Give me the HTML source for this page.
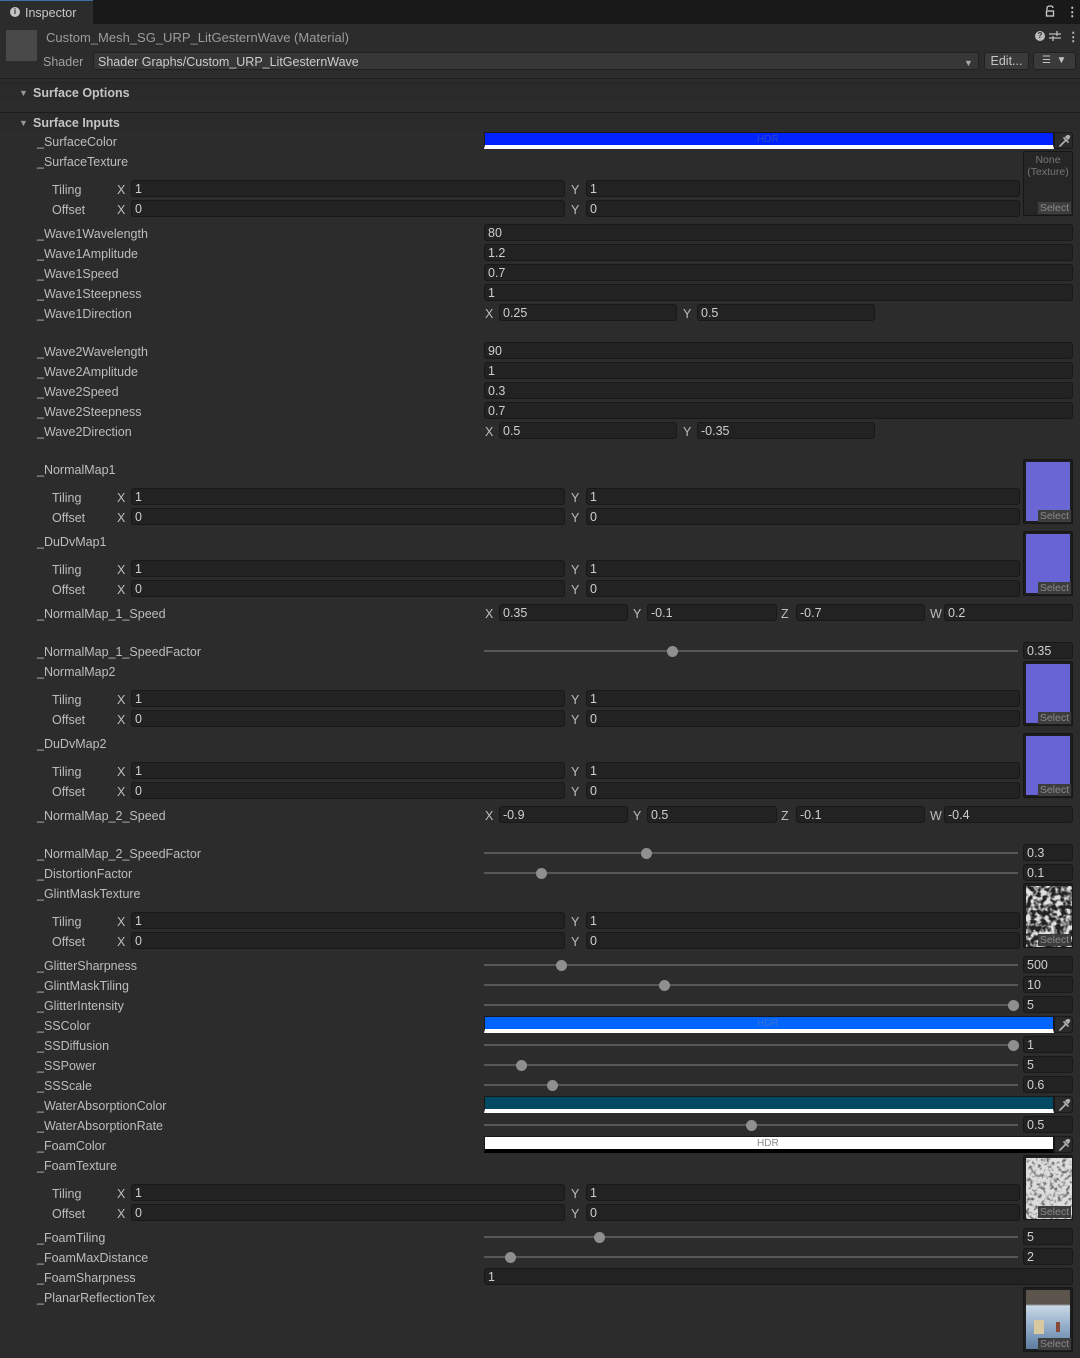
<!DOCTYPE html>
<html><head><meta charset="utf-8"><style>
*{margin:0;padding:0;box-sizing:border-box}
body{width:1080px;height:1358px;background:#2c2c2c;font-family:"Liberation Sans",sans-serif;font-size:12.5px;color:#bdbdbd;position:relative;overflow:hidden}
div,span{position:absolute}
.t{line-height:16px;white-space:nowrap;margin-top:1px}
.f{height:17px;background:#222;border:1px solid #181818;border-radius:3px;color:#cfcfcf;font-size:12.5px;line-height:17px;padding-left:3px;white-space:nowrap}
.tr{left:484px;width:534px;height:2px;background:#575757}
.kn{width:11px;height:11px;border-radius:50%;background:#8f8f8f}
.th{left:1023px;width:50px;background:#1d1d1d;border:1px solid #161616;border-radius:2px;overflow:hidden}
.th .in{left:2px;top:2px;right:2px;bottom:2px}
.sel{right:1px;bottom:1px;background:#3d3d3d;color:#8a8a8a;font-size:10.5px;line-height:12px;padding:0 2px}
.cb{left:484px;width:570px;border:1px solid #191919}
.ey{left:1054px;width:19px;background:#2a2a2a;border:1px solid #191919;border-radius:0 3px 3px 0}
.ey svg{position:absolute;left:3px;top:2px}
</style></head><body>
<svg width="0" height="0" style="position:absolute"><defs><g id="eye"><path d="M2 11 L8 5 M6 3 L10 7 M8 2 Q10 0 11 1 Q12 2 10 4 Z" stroke="#b0b0b0" stroke-width="1.6" fill="#b0b0b0" stroke-linecap="round"/></g></defs></svg>
<!-- top bar -->
<div style="left:0;top:0;width:1080px;height:24px;background:#191919"></div>
<div style="left:0;top:0;width:93px;height:24px;background:#2c2c2c;border-top:1px solid #3a6fa8"></div>
<div style="left:10px;top:7px;width:10px;height:10px;border-radius:50%;background:#c4c4c4;color:#2c2c2c;font-size:8px;line-height:10px;text-align:center;font-weight:bold">i</div>
<div class="t" style="left:25px;top:4px;color:#c8c8c8">Inspector</div>
<svg style="position:absolute;left:1045px;top:5px" width="10" height="12"><path d="M2 5 V3 Q2 1 5 1 Q8 1 8 3" stroke="#ccc" stroke-width="1.3" fill="none"/><rect x="1.5" y="6" width="7" height="5" stroke="#ccc" stroke-width="1.3" fill="none"/></svg>
<div class="t" style="left:1066px;top:3px;color:#ccc;font-weight:bold">⋮</div>
<!-- header -->
<div style="left:6px;top:30px;width:31px;height:31px;background:#494949"></div>
<div class="t" style="left:46px;top:29px;color:#9c9c9c;font-size:13px">Custom_Mesh_SG_URP_LitGesternWave (Material)</div>
<div style="left:1035px;top:31px;width:10px;height:10px;border-radius:50%;background:#bbb;color:#2c2c2c;font-size:8px;line-height:10px;text-align:center;font-weight:bold">?</div>
<svg style="position:absolute;left:1049px;top:30px" width="12" height="12"><path d="M0 4H12M0 8H12M8 1V6M4 6V11" stroke="#bbb" stroke-width="1.3"/></svg>
<div class="t" style="left:1067px;top:28px;color:#bbb;font-weight:bold">⋮</div>
<div class="t" style="left:43px;top:53px;color:#a0a0a0">Shader</div>
<div style="left:93px;top:52px;width:886px;height:18px;background:#373737;border:1px solid #202020;border-radius:3px"></div>
<div class="t" style="left:98px;top:53px;color:#cdcdcd">Shader Graphs/Custom_URP_LitGesternWave</div>
<div class="t" style="left:964px;top:54px;color:#aaa;font-size:9px">▼</div>
<div style="left:984px;top:52px;width:45px;height:18px;background:#3a3a3a;border:1px solid #202020;border-radius:3px;color:#c4c4c4;text-align:center;line-height:16px">Edit...</div>
<div style="left:1033px;top:52px;width:43px;height:18px;background:#3a3a3a;border:1px solid #202020;border-radius:3px;color:#c4c4c4;font-size:10px;line-height:16px;padding-left:8px">☰ &nbsp;▼</div>
<div style="left:0;top:78px;width:1080px;height:1px;background:#1c1c1c"></div>
<div style="left:0;top:82px;width:1080px;height:1px;background:#242424"></div>
<div style="left:0;top:83px;width:1080px;height:18px;background:#2a2a2a"></div>
<div class="t" style="left:19px;top:84px;font-size:9px;color:#999">▼</div>
<div class="t" style="left:33px;top:84px;font-weight:bold;color:#c4c4c4">Surface Options</div>
<div style="left:0;top:112px;width:1080px;height:1px;background:#1c1c1c"></div>
<div style="left:0;top:113px;width:1080px;height:17px;background:#2a2a2a"></div>
<div class="t" style="left:19px;top:114px;font-size:9px;color:#999">▼</div>
<div class="t" style="left:33px;top:114px;font-weight:bold;color:#c4c4c4">Surface Inputs</div>

<!-- labels -->
<div class="t" style="left:37px;top:133px">_SurfaceColor</div>
<div class="t" style="left:37px;top:153px">_SurfaceTexture</div>
<div class="t" style="left:37px;top:225px">_Wave1Wavelength</div>
<div class="t" style="left:37px;top:245px">_Wave1Amplitude</div>
<div class="t" style="left:37px;top:265px">_Wave1Speed</div>
<div class="t" style="left:37px;top:285px">_Wave1Steepness</div>
<div class="t" style="left:37px;top:305px">_Wave1Direction</div>
<div class="t" style="left:37px;top:343px">_Wave2Wavelength</div>
<div class="t" style="left:37px;top:363px">_Wave2Amplitude</div>
<div class="t" style="left:37px;top:383px">_Wave2Speed</div>
<div class="t" style="left:37px;top:403px">_Wave2Steepness</div>
<div class="t" style="left:37px;top:423px">_Wave2Direction</div>
<div class="t" style="left:37px;top:461px">_NormalMap1</div>
<div class="t" style="left:37px;top:533px">_DuDvMap1</div>
<div class="t" style="left:37px;top:605px">_NormalMap_1_Speed</div>
<div class="t" style="left:37px;top:643px">_NormalMap_1_SpeedFactor</div>
<div class="t" style="left:37px;top:663px">_NormalMap2</div>
<div class="t" style="left:37px;top:735px">_DuDvMap2</div>
<div class="t" style="left:37px;top:807px">_NormalMap_2_Speed</div>
<div class="t" style="left:37px;top:845px">_NormalMap_2_SpeedFactor</div>
<div class="t" style="left:37px;top:865px">_DistortionFactor</div>
<div class="t" style="left:37px;top:885px">_GlintMaskTexture</div>
<div class="t" style="left:37px;top:957px">_GlitterSharpness</div>
<div class="t" style="left:37px;top:977px">_GlintMaskTiling</div>
<div class="t" style="left:37px;top:997px">_GlitterIntensity</div>
<div class="t" style="left:37px;top:1017px">_SSColor</div>
<div class="t" style="left:37px;top:1037px">_SSDiffusion</div>
<div class="t" style="left:37px;top:1057px">_SSPower</div>
<div class="t" style="left:37px;top:1077px">_SSScale</div>
<div class="t" style="left:37px;top:1097px">_WaterAbsorptionColor</div>
<div class="t" style="left:37px;top:1117px">_WaterAbsorptionRate</div>
<div class="t" style="left:37px;top:1137px">_FoamColor</div>
<div class="t" style="left:37px;top:1157px">_FoamTexture</div>
<div class="t" style="left:37px;top:1229px">_FoamTiling</div>
<div class="t" style="left:37px;top:1249px">_FoamMaxDistance</div>
<div class="t" style="left:37px;top:1269px">_FoamSharpness</div>
<div class="t" style="left:37px;top:1289px">_PlanarReflectionTex</div>

<div class="t" style="left:52px;top:181px">Tiling</div><div class="t" style="left:117px;top:181px">X</div><div class="f" style="left:131px;top:180px;width:434px">1</div><div class="t" style="left:571px;top:181px">Y</div><div class="f" style="left:586px;top:180px;width:434px">1</div>
<div class="t" style="left:52px;top:201px">Offset</div><div class="t" style="left:117px;top:201px">X</div><div class="f" style="left:131px;top:200px;width:434px">0</div><div class="t" style="left:571px;top:201px">Y</div><div class="f" style="left:586px;top:200px;width:434px">0</div>

<div class="t" style="left:52px;top:489px">Tiling</div><div class="t" style="left:117px;top:489px">X</div><div class="f" style="left:131px;top:488px;width:434px">1</div><div class="t" style="left:571px;top:489px">Y</div><div class="f" style="left:586px;top:488px;width:434px">1</div>
<div class="t" style="left:52px;top:509px">Offset</div><div class="t" style="left:117px;top:509px">X</div><div class="f" style="left:131px;top:508px;width:434px">0</div><div class="t" style="left:571px;top:509px">Y</div><div class="f" style="left:586px;top:508px;width:434px">0</div>

<div class="t" style="left:52px;top:561px">Tiling</div><div class="t" style="left:117px;top:561px">X</div><div class="f" style="left:131px;top:560px;width:434px">1</div><div class="t" style="left:571px;top:561px">Y</div><div class="f" style="left:586px;top:560px;width:434px">1</div>
<div class="t" style="left:52px;top:581px">Offset</div><div class="t" style="left:117px;top:581px">X</div><div class="f" style="left:131px;top:580px;width:434px">0</div><div class="t" style="left:571px;top:581px">Y</div><div class="f" style="left:586px;top:580px;width:434px">0</div>

<div class="t" style="left:52px;top:691px">Tiling</div><div class="t" style="left:117px;top:691px">X</div><div class="f" style="left:131px;top:690px;width:434px">1</div><div class="t" style="left:571px;top:691px">Y</div><div class="f" style="left:586px;top:690px;width:434px">1</div>
<div class="t" style="left:52px;top:711px">Offset</div><div class="t" style="left:117px;top:711px">X</div><div class="f" style="left:131px;top:710px;width:434px">0</div><div class="t" style="left:571px;top:711px">Y</div><div class="f" style="left:586px;top:710px;width:434px">0</div>

<div class="t" style="left:52px;top:763px">Tiling</div><div class="t" style="left:117px;top:763px">X</div><div class="f" style="left:131px;top:762px;width:434px">1</div><div class="t" style="left:571px;top:763px">Y</div><div class="f" style="left:586px;top:762px;width:434px">1</div>
<div class="t" style="left:52px;top:783px">Offset</div><div class="t" style="left:117px;top:783px">X</div><div class="f" style="left:131px;top:782px;width:434px">0</div><div class="t" style="left:571px;top:783px">Y</div><div class="f" style="left:586px;top:782px;width:434px">0</div>

<div class="t" style="left:52px;top:913px">Tiling</div><div class="t" style="left:117px;top:913px">X</div><div class="f" style="left:131px;top:912px;width:434px">1</div><div class="t" style="left:571px;top:913px">Y</div><div class="f" style="left:586px;top:912px;width:434px">1</div>
<div class="t" style="left:52px;top:933px">Offset</div><div class="t" style="left:117px;top:933px">X</div><div class="f" style="left:131px;top:932px;width:434px">0</div><div class="t" style="left:571px;top:933px">Y</div><div class="f" style="left:586px;top:932px;width:434px">0</div>

<div class="t" style="left:52px;top:1185px">Tiling</div><div class="t" style="left:117px;top:1185px">X</div><div class="f" style="left:131px;top:1184px;width:434px">1</div><div class="t" style="left:571px;top:1185px">Y</div><div class="f" style="left:586px;top:1184px;width:434px">1</div>
<div class="t" style="left:52px;top:1205px">Offset</div><div class="t" style="left:117px;top:1205px">X</div><div class="f" style="left:131px;top:1204px;width:434px">0</div><div class="t" style="left:571px;top:1205px">Y</div><div class="f" style="left:586px;top:1204px;width:434px">0</div>

<div class="f" style="left:484px;top:224px;width:589px">80</div>
<div class="f" style="left:484px;top:244px;width:589px">1.2</div>
<div class="f" style="left:484px;top:264px;width:589px">0.7</div>
<div class="f" style="left:484px;top:284px;width:589px">1</div>
<div class="f" style="left:484px;top:342px;width:589px">90</div>
<div class="f" style="left:484px;top:362px;width:589px">1</div>
<div class="f" style="left:484px;top:382px;width:589px">0.3</div>
<div class="f" style="left:484px;top:402px;width:589px">0.7</div>
<div class="f" style="left:484px;top:1268px;width:589px">1</div>

<div class="t" style="left:485px;top:305px">X</div><div class="f" style="left:499px;top:304px;width:178px">0.25</div><div class="t" style="left:683px;top:305px">Y</div><div class="f" style="left:697px;top:304px;width:178px">0.5</div>
<div class="t" style="left:485px;top:423px">X</div><div class="f" style="left:499px;top:422px;width:178px">0.5</div><div class="t" style="left:683px;top:423px">Y</div><div class="f" style="left:697px;top:422px;width:178px">-0.35</div>

<div class="t" style="left:485px;top:605px">X</div><div class="f" style="left:499px;top:604px;width:129px">0.35</div><div class="t" style="left:633px;top:605px">Y</div><div class="f" style="left:647px;top:604px;width:130px">-0.1</div><div class="t" style="left:781px;top:605px">Z</div><div class="f" style="left:796px;top:604px;width:129px">-0.7</div><div class="t" style="left:930px;top:605px">W</div><div class="f" style="left:944px;top:604px;width:129px">0.2</div>
<div class="t" style="left:485px;top:807px">X</div><div class="f" style="left:499px;top:806px;width:129px">-0.9</div><div class="t" style="left:633px;top:807px">Y</div><div class="f" style="left:647px;top:806px;width:130px">0.5</div><div class="t" style="left:781px;top:807px">Z</div><div class="f" style="left:796px;top:806px;width:129px">-0.1</div><div class="t" style="left:930px;top:807px">W</div><div class="f" style="left:944px;top:806px;width:129px">-0.4</div>

<div class="tr" style="top:650px"></div><div class="kn" style="left:667px;top:646px"></div><div class="f" style="left:1023px;top:642px;width:50px">0.35</div>
<div class="tr" style="top:852px"></div><div class="kn" style="left:641px;top:848px"></div><div class="f" style="left:1023px;top:844px;width:50px">0.3</div>
<div class="tr" style="top:872px"></div><div class="kn" style="left:536px;top:868px"></div><div class="f" style="left:1023px;top:864px;width:50px">0.1</div>
<div class="tr" style="top:964px"></div><div class="kn" style="left:556px;top:960px"></div><div class="f" style="left:1023px;top:956px;width:50px">500</div>
<div class="tr" style="top:984px"></div><div class="kn" style="left:659px;top:980px"></div><div class="f" style="left:1023px;top:976px;width:50px">10</div>
<div class="tr" style="top:1004px"></div><div class="kn" style="left:1008px;top:1000px"></div><div class="f" style="left:1023px;top:996px;width:50px">5</div>
<div class="tr" style="top:1044px"></div><div class="kn" style="left:1008px;top:1040px"></div><div class="f" style="left:1023px;top:1036px;width:50px">1</div>
<div class="tr" style="top:1064px"></div><div class="kn" style="left:516px;top:1060px"></div><div class="f" style="left:1023px;top:1056px;width:50px">5</div>
<div class="tr" style="top:1084px"></div><div class="kn" style="left:547px;top:1080px"></div><div class="f" style="left:1023px;top:1076px;width:50px">0.6</div>
<div class="tr" style="top:1124px"></div><div class="kn" style="left:746px;top:1120px"></div><div class="f" style="left:1023px;top:1116px;width:50px">0.5</div>
<div class="tr" style="top:1236px"></div><div class="kn" style="left:594px;top:1232px"></div><div class="f" style="left:1023px;top:1228px;width:50px">5</div>
<div class="tr" style="top:1256px"></div><div class="kn" style="left:505px;top:1252px"></div><div class="f" style="left:1023px;top:1248px;width:50px">2</div>

<div class="cb" style="top:132px;height:17px;background:#0022ff;border-bottom:4px solid #fff"><span style="left:272px;top:1px;color:#2a46c8;font-size:10px">HDR</span></div>
<div class="ey" style="top:132px;height:17px"><svg width="13" height="13"><use href="#eye"/></svg></div>
<div class="cb" style="top:1016px;height:17px;background:#0064ff;border-bottom:4px solid #fff"><span style="left:272px;top:1px;color:#3a72d0;font-size:10px">HDR</span></div>
<div class="ey" style="top:1016px;height:17px"><svg width="13" height="13"><use href="#eye"/></svg></div>
<div class="cb" style="top:1096px;height:17px;background:#004a64;border-bottom:4px solid #fff"></div>
<div class="ey" style="top:1096px;height:17px"><svg width="13" height="13"><use href="#eye"/></svg></div>
<div class="cb" style="top:1136px;height:17px;background:#fff;border-bottom:4px solid #000"><span style="left:272px;top:1px;color:#888;font-size:10px">HDR</span></div>
<div class="ey" style="top:1136px;height:17px"><svg width="13" height="13"><use href="#eye"/></svg></div>

<div class="th" style="top:151px;height:65px;background:#262626"><span style="left:0;width:48px;top:2px;text-align:center;color:#777;font-size:10.5px;line-height:12px">None<br>(Texture)</span><span class="sel">Select</span></div>
<div class="th" style="top:459px;height:65px"><div class="in" style="background:#6a66d4"></div><span class="sel">Select</span></div>
<div class="th" style="top:531px;height:65px"><div class="in" style="background:#6864d6"></div><span class="sel">Select</span></div>
<div class="th" style="top:661px;height:65px"><div class="in" style="background:#6864d6"></div><span class="sel">Select</span></div>
<div class="th" style="top:733px;height:65px"><div class="in" style="background:#6864d6"></div><span class="sel">Select</span></div>
<div class="th" style="top:883px;height:65px"><div class="in" style="background:#222"><svg width="46" height="61" style="position:absolute;left:0;top:0"><filter id="n1"><feTurbulence type="fractalNoise" baseFrequency="0.2" numOctaves="2" seed="3"/><feColorMatrix type="matrix" values="0 0 0 0 0.75  0 0 0 0 0.75  0 0 0 0 0.75  4 0 0 0 -1.6"/></filter><rect width="46" height="61" fill="#222"/><rect width="46" height="61" filter="url(#n1)"/></svg></div><span class="sel">Select</span></div>
<div class="th" style="top:1155px;height:65px"><div class="in" style="background:#ddd"><svg width="46" height="61" style="position:absolute;left:0;top:0"><filter id="n2"><feTurbulence type="fractalNoise" baseFrequency="0.25" numOctaves="2" seed="7"/><feColorMatrix type="matrix" values="0 0 0 0 0.15  0 0 0 0 0.15  0 0 0 0 0.15  -4 0 0 0 2.1"/></filter><rect width="46" height="61" fill="#ddd"/><rect width="46" height="61" filter="url(#n2)"/></svg></div><span class="sel">Select</span></div>
<div class="th" style="top:1287px;height:65px"><div class="in" style="background:linear-gradient(#5a544c 0,#5a544c 14px,#c8d8e6 16px,#8aa6c4 40px,#5d7ca0 100%)"><span style="left:8px;top:30px;width:10px;height:14px;background:#d8c8a0"></span><span style="left:30px;top:32px;width:4px;height:10px;background:#8a4a3a"></span></div><span class="sel">Select</span></div>
</body></html>
